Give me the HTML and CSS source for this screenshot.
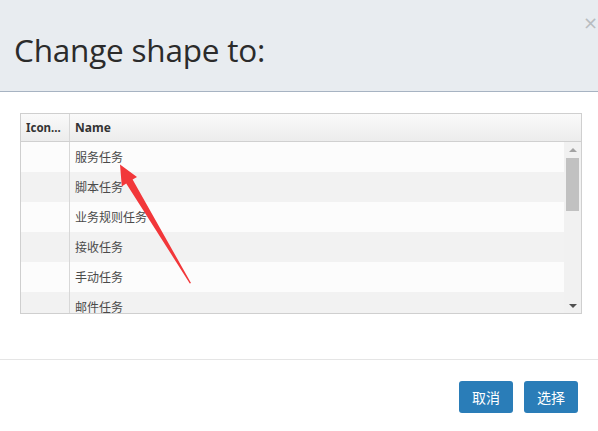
FILE: index.html
```html
<!DOCTYPE html>
<html>
<head>
<meta charset="utf-8">
<link rel="stylesheet" href="styles.css">
</head>
<body>
<div class="modal">
  <div class="modal-header">
    <h1 class="title">Change shape to:</h1>
    <span class="close">×</span>
  </div>
  <div class="modal-body">
    <div class="grid">
      <div class="grid-head">
        <div class="col-icon">Icon...</div>
        <div class="col-name">Name</div>
      </div>
      <div class="grid-main">
        <div class="rows">
          <div class="row odd"><div class="col-icon"></div><div class="col-name">服务任务</div></div>
          <div class="row even"><div class="col-icon"></div><div class="col-name">脚本任务</div></div>
          <div class="row odd"><div class="col-icon"></div><div class="col-name">业务规则任务</div></div>
          <div class="row even"><div class="col-icon"></div><div class="col-name">接收任务</div></div>
          <div class="row odd"><div class="col-icon"></div><div class="col-name">手动任务</div></div>
          <div class="row even"><div class="col-icon"></div><div class="col-name">邮件任务</div></div>
        </div>
        <div class="scrollbar">
          <span class="arrow-up"></span>
          <span class="thumb"></span>
          <span class="spacer"></span>
          <span class="arrow-down"></span>
        </div>
      </div>
    </div>
  </div>
  <div class="modal-footer">
    <button class="btn">取消</button>
    <button class="btn">选择</button>
  </div>
  <svg class="pointer" width="598" height="431" viewBox="0 0 598 431">
    <polygon points="120,164.5 137,177 132.6,179.6 191,283 189.8,283.4 126.2,183.5 121.8,186.5" fill="#f2373a"/>
  </svg>
</div>
</body>
</html>
```
FILE: styles.css
```css
html, body {
  margin: 0;
  padding: 0;
  background: #ffffff;
}
body {
  font-family: "Noto Sans", "Noto Sans CJK SC", sans-serif;
  color: #333333;
}
.modal {
  position: relative;
  width: 598px;
  height: 431px;
  overflow: hidden;
}
.modal-header {
  height: 91px;
  background: #e8ecf0;
  border-bottom: 1px solid #a7b3c2;
  display: flex;
  align-items: flex-start;
  justify-content: space-between;
}
.title {
  margin: 28px 0 0 14px;
  font-family: "Open Sans", "Noto Sans", sans-serif;
  font-weight: 400;
  font-size: 31.5px;
  line-height: 44px;
  color: #2b2b2b;
  letter-spacing: -0.2px;
}
.close {
  margin: 8px 3px 0 0;
  width: 12px;
  font-size: 18px;
  line-height: 30px;
  color: #b8bcc0;
  font-family: "DejaVu Sans", sans-serif;
}
.modal-body {
  padding: 21px 16px 0 20px;
  height: 268px;
  box-sizing: border-box;
  border-bottom: 1px solid #e5e5e5;
}
.grid {
  border: 1px solid #cfcfcf;
  height: 201px;
  box-sizing: border-box;
  font-family: "Noto Sans", "Noto Sans CJK SC", sans-serif;
  font-size: 12px;
  overflow: hidden;
}
.grid-head {
  display: flex;
  height: 27px;
  background: linear-gradient(#fafafa, #ececec);
  border-bottom: 1px solid #d0d0d0;
  font-weight: 700;
  color: #333;
}
.grid-head .col-icon {
  border-right: 1px solid #d8d8d8;
  font-size: 11.5px;
  white-space: nowrap;
}
.col-icon {
  width: 49px;
  padding-left: 5px;
  box-sizing: border-box;
  display: flex;
  align-items: center;
  flex: none;
}
.col-name {
  padding-left: 5px;
  display: flex;
  align-items: center;
  flex: 1;
}
.grid-main {
  display: flex;
  height: 172px;
}
.rows {
  flex: 1;
  display: flex;
  flex-direction: column;
}
.row {
  display: flex;
  height: 30px;
  flex: none;
  color: #4a4a4a;
}
.row .col-icon {
  border-right: 1px solid #d8d8d8;
}
.row.odd { background: #fcfcfc; }
.row.even { background: #f2f2f2; }
.scrollbar {
  width: 17px;
  flex: none;
  background: #f1f1f1;
  display: flex;
  flex-direction: column;
  align-items: center;
}
.arrow-up {
  margin-top: 6px;
  width: 0;
  height: 0;
  border-left: 4px solid transparent;
  border-right: 4px solid transparent;
  border-bottom: 4px solid #a3a3a3;
}
.thumb {
  margin-top: 6px;
  width: 13px;
  height: 53px;
  background: #c1c1c1;
}
.spacer { flex: 1; }
.arrow-down {
  margin-bottom: 6px;
  width: 0;
  height: 0;
  border-left: 4px solid transparent;
  border-right: 4px solid transparent;
  border-top: 4px solid #505050;
}
.modal-footer {
  display: flex;
  justify-content: flex-end;
  gap: 11px;
  padding: 21px 20px 0 0;
}
.btn {
  width: 54px;
  height: 32px;
  border: none;
  border-radius: 3px;
  background: #2a7db8;
  color: #ffffff;
  font-family: "Noto Sans CJK SC", sans-serif;
  font-size: 14px;
  padding: 0;
}
.pointer {
  position: absolute;
  left: 0;
  top: 0;
  pointer-events: none;
}
```
